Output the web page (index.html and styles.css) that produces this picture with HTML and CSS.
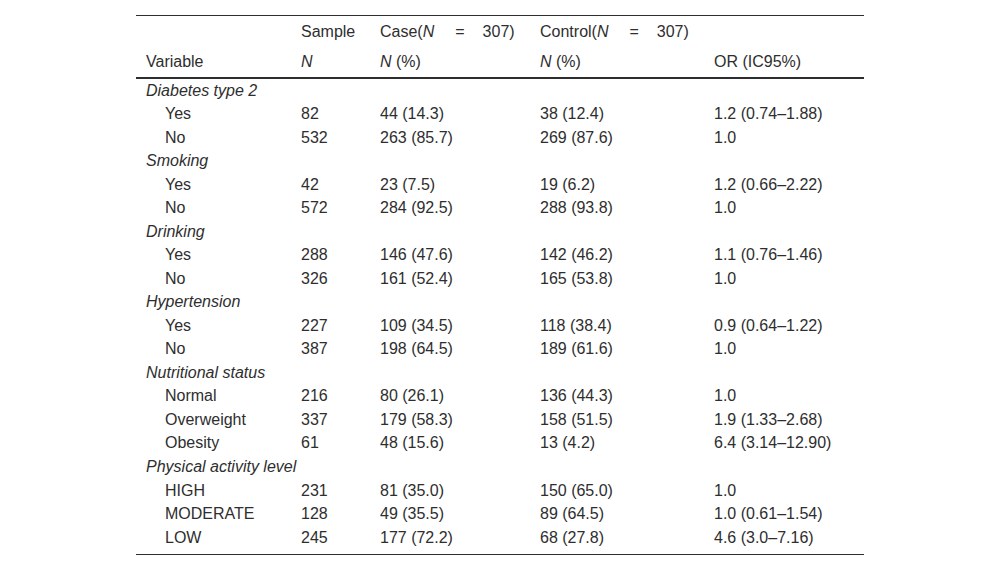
FILE: index.html
```html
<!DOCTYPE html>
<html>
<head>
<meta charset="utf-8">
<link rel="stylesheet" href="styles.css">
</head>
<body>
<table class="tbl">
  <colgroup>
    <col class="c1"><col class="c2"><col class="c3"><col class="c4"><col class="c5">
  </colgroup>
  <thead>
    <tr class="h1">
      <th></th>
      <th>Sample</th>
      <th>Case(<i>N</i><span class="eq">=</span>307)</th>
      <th>Control(<i>N</i><span class="eq">=</span>307)</th>
      <th></th>
    </tr>
    <tr class="h2">
      <th>Variable</th>
      <th><i>N</i></th>
      <th><i>N</i> (%)</th>
      <th><i>N</i> (%)</th>
      <th>OR (IC95%)</th>
    </tr>
  </thead>
  <tbody>
    <tr><td class="grp" colspan="5">Diabetes type 2</td></tr>
    <tr><td class="sub">Yes</td><td>82</td><td>44 (14.3)</td><td>38 (12.4)</td><td>1.2 (0.74–1.88)</td></tr>
    <tr><td class="sub">No</td><td>532</td><td>263 (85.7)</td><td>269 (87.6)</td><td>1.0</td></tr>
    <tr><td class="grp" colspan="5">Smoking</td></tr>
    <tr><td class="sub">Yes</td><td>42</td><td>23 (7.5)</td><td>19 (6.2)</td><td>1.2 (0.66–2.22)</td></tr>
    <tr><td class="sub">No</td><td>572</td><td>284 (92.5)</td><td>288 (93.8)</td><td>1.0</td></tr>
    <tr><td class="grp" colspan="5">Drinking</td></tr>
    <tr><td class="sub">Yes</td><td>288</td><td>146 (47.6)</td><td>142 (46.2)</td><td>1.1 (0.76–1.46)</td></tr>
    <tr><td class="sub">No</td><td>326</td><td>161 (52.4)</td><td>165 (53.8)</td><td>1.0</td></tr>
    <tr><td class="grp" colspan="5">Hypertension</td></tr>
    <tr><td class="sub">Yes</td><td>227</td><td>109 (34.5)</td><td>118 (38.4)</td><td>0.9 (0.64–1.22)</td></tr>
    <tr><td class="sub">No</td><td>387</td><td>198 (64.5)</td><td>189 (61.6)</td><td>1.0</td></tr>
    <tr><td class="grp" colspan="5">Nutritional status</td></tr>
    <tr><td class="sub">Normal</td><td>216</td><td>80 (26.1)</td><td>136 (44.3)</td><td>1.0</td></tr>
    <tr><td class="sub">Overweight</td><td>337</td><td>179 (58.3)</td><td>158 (51.5)</td><td>1.9 (1.33–2.68)</td></tr>
    <tr><td class="sub">Obesity</td><td>61</td><td>48 (15.6)</td><td>13 (4.2)</td><td>6.4 (3.14–12.90)</td></tr>
    <tr><td class="grp" colspan="5">Physical activity level</td></tr>
    <tr><td class="sub">HIGH</td><td>231</td><td>81 (35.0)</td><td>150 (65.0)</td><td>1.0</td></tr>
    <tr><td class="sub">MODERATE</td><td>128</td><td>49 (35.5)</td><td>89 (64.5)</td><td>1.0 (0.61–1.54)</td></tr>
    <tr class="last"><td class="sub">LOW</td><td>245</td><td>177 (72.2)</td><td>68 (27.8)</td><td>4.6 (3.0–7.16)</td></tr>
  </tbody>
</table>
</body>
</html>
```

FILE: styles.css
```css
html, body {
  margin: 0;
  padding: 0;
  background: #fff;
}
body {
  padding-top: 15px;
  font-family: "Liberation Sans", Arial, sans-serif;
  font-size: 16px;
  color: #2e2e2e;
}
.tbl {
  margin: 0 auto;
  width: 728px;
  border-collapse: collapse;
  table-layout: fixed;
  border-top: 1px solid #2e2e2e;
  border-bottom: 1px solid #2e2e2e;
}
.c1 { width: 155px; }
.c2 { width: 79px; }
.c3 { width: 160px; }
.c4 { width: 174px; }
.c5 { width: 160px; }
th, td {
  text-align: left;
  font-weight: normal;
  padding: 0 0 0 10px;
  white-space: nowrap;
  vertical-align: middle;
}
.h1 th {
  height: 31px;
  line-height: 18px;
}
.h2 th {
  height: 30px;
  line-height: 18px;
  border-bottom: 2px solid #2e2e2e;
}
td {
  height: 23.53px;
  line-height: 18px;
}
.grp {
  font-style: italic;
}
.sub {
  padding-left: 29px;
}
.eq {
  display: inline-block;
  margin: 0 18px 0 21px;
}
.last td {
  padding-bottom: 5px;
}
```
